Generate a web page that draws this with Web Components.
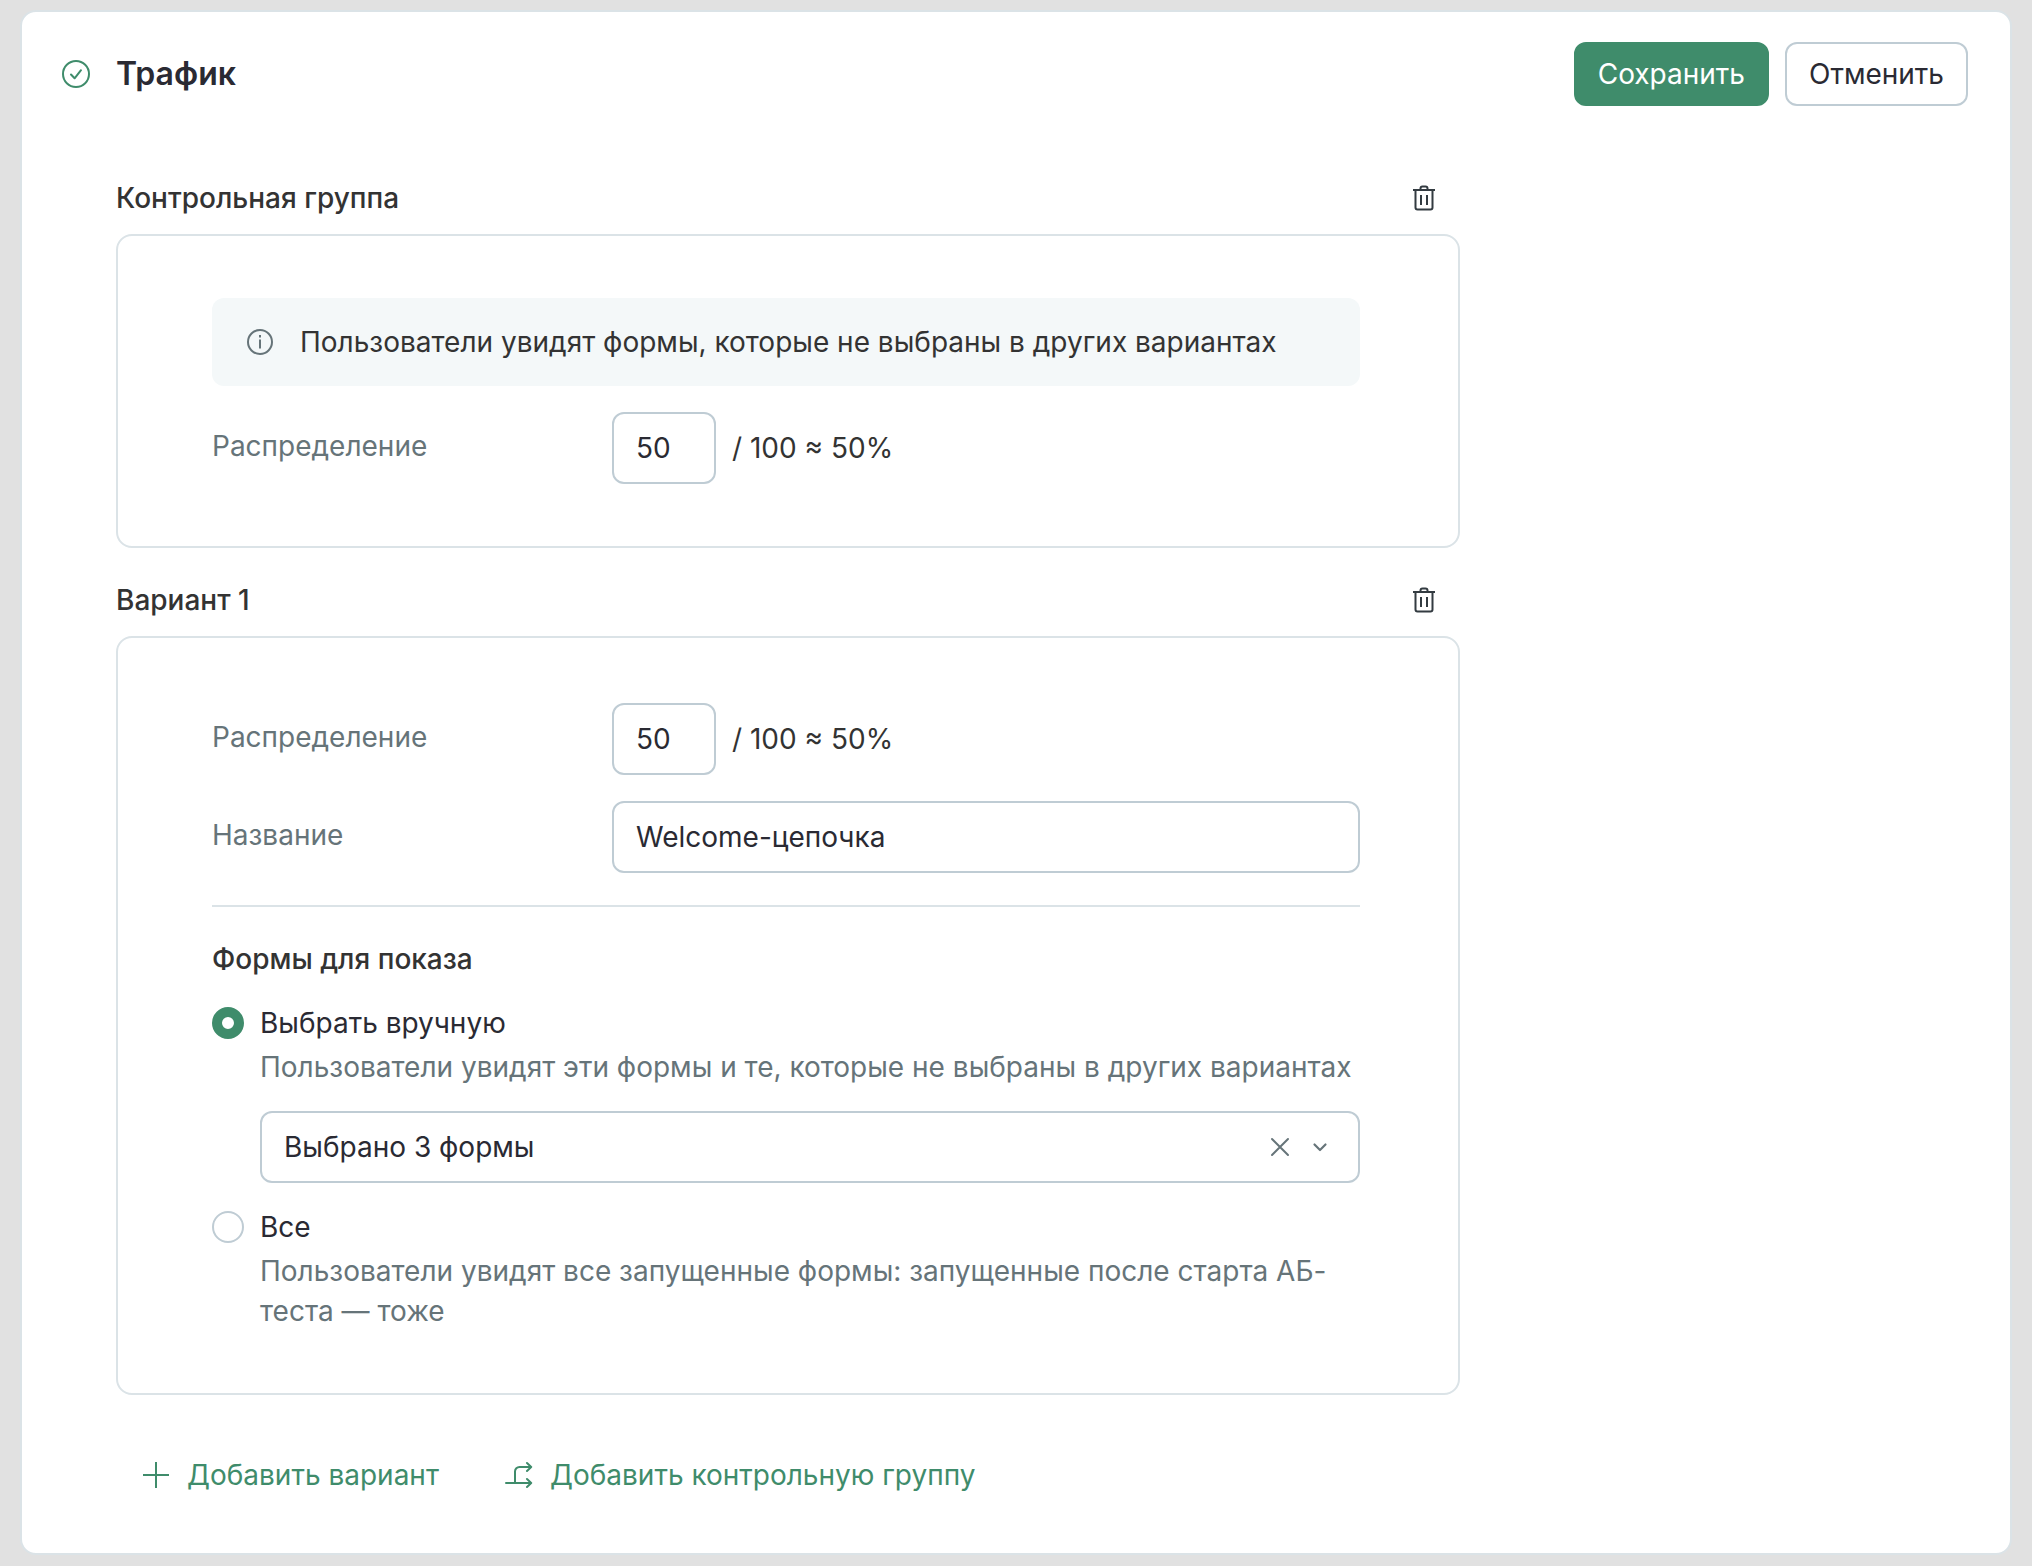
<!DOCTYPE html>
<html lang="ru">
<head>
<meta charset="utf-8">
<meta name="viewport" content="width=device-width, initial-scale=1">
<title>Трафик</title>
<style>
  :root {
    --green: #3f8c6b;
    --line: #dbe3e7;
    --field-line: #bfccd4;
    --muted: #667479;
    --ink: #2a2a33;
    --text: #333;
  }
  body {
    margin: 0;
    padding: 10px 20px 11px;
    background: #e1e1e1;
    color: var(--text);
    font: 28px/40px Inter, "Liberation Sans", sans-serif;
  }
</style>
</head>
<body>
<traffic-panel></traffic-panel>

<script>
const reset = `
  *, *::before, *::after { box-sizing: border-box; }
  button, input, select { font: inherit; color: inherit; margin: 0; }
  button { cursor: pointer; }
  svg { display: block; fill: none; stroke: currentColor; stroke-width: 2; }
`;

function define(name, html, setup) {
  const template = document.createElement('template');
  template.innerHTML = html;
  customElements.define(name, class extends HTMLElement {
    constructor() {
      super();
      this.attachShadow({ mode: 'open' }).append(template.content.cloneNode(true));
    }
    connectedCallback() {
      if (setup) setup(this, this.shadowRoot);
    }
  });
}

const icons = {
  check: '<circle cx="14" cy="14" r="13"/><path d="M9 14.5l3.6 3.8L19 10.2" stroke-linecap="round" stroke-linejoin="round"/>',
  trash: '<path d="M3 6h22M5.500 6v17.500a2 2 0 0 0 2 2h13a2 2 0 0 0 2-2V6M10.500 6V4.500a2 2 0 0 1 2-2h3a2 2 0 0 1 2 2V6M11 11v10M17 11v10"/>',
  info: '<circle cx="14" cy="14" r="12"/><path d="M14 11.500v9M14 7v2.500" stroke-width="2"/>',
  plus: '<path d="M14 1v26M1 14h26"/>',
  cross: '<path d="M6 6l16 16M22 6L6 22" stroke-linecap="round"/>',
  chevron: '<path d="M8.500 11.500l5.500 5.500 5.500-5.500" stroke-width="2.200" stroke-linecap="round" stroke-linejoin="round"/>',
  branch: '<path d="M1 22h25M10 22V10.500a4.500 4.500 0 0 1 4.500-4.500H26M22 2l4.200 4-4.200 4M22 18l4.200 4-4.200 4" stroke-linecap="round" stroke-linejoin="round"/>'
};

define('ui-icon', `
  <style>
    ${reset}
    :host { display: block; flex: none; width: 28px; height: 28px; }
  </style>
  <svg viewBox="0 0 28 28" width="28" height="28" aria-hidden="true"></svg>
`, (host, root) => {
  root.querySelector('svg').innerHTML = icons[host.getAttribute('name')] || '';
});

define('ui-button', `
  <style>
    ${reset}
    :host { display: block; }
    button {
      display: flex; align-items: center; justify-content: center;
      height: 64px; padding: 0 22px;
      border: 2px solid var(--field-line); border-radius: 12px;
      background: #fff; color: var(--ink); white-space: nowrap;
    }
    :host([primary]) button { background: var(--green); border-color: var(--green); color: #fff; }
  </style>
  <button type="button"><slot></slot></button>
`);

define('link-button', `
  <style>
    ${reset}
    :host { display: block; color: var(--green); }
    button {
      display: flex; align-items: center; gap: 17px;
      padding: 0; border: 0; background: none; white-space: nowrap;
    }
  </style>
  <button type="button"><span><slot></slot></span></button>
`, (host, root) => {
  const icon = document.createElement('ui-icon');
  icon.setAttribute('name', host.getAttribute('icon'));
  root.querySelector('button').prepend(icon);
});

define('info-note', `
  <style>
    ${reset}
    :host {
      display: flex; align-items: center; gap: 26px;
      padding: 24px 34px; border-radius: 12px; background: #f4f8f9;
    }
    ui-icon { color: var(--muted); }
  </style>
  <ui-icon name="info"></ui-icon><span><slot></slot></span>
`);

define('field-row', `
  <style>
    ${reset}
    :host { display: flex; align-items: center; }
    label { flex: none; width: 400px; padding-bottom: 4px; color: var(--muted); }
    .control { flex: 1; display: flex; align-items: center; gap: 16px; min-width: 0; }
    input {
      flex: 1; min-width: 0; height: 72px; padding: 0 22px;
      border: 2px solid var(--field-line); border-radius: 12px;
      background: #fff; color: var(--ink); outline: none;
    }
    :host([short]) input { flex: none; width: 104px; }
    slot { display: block; }
    :host(:not([short])) slot { display: none; }
  </style>
  <label for="field"></label>
  <div class="control"><input id="field" type="text"><slot></slot></div>
`, (host, root) => {
  root.querySelector('label').textContent = host.getAttribute('label');
  root.querySelector('input').value = host.getAttribute('value');
});

define('forms-select', `
  <style>
    ${reset}
    :host {
      display: flex; align-items: center; gap: 12px; height: 72px; padding-right: 24px;
      border: 2px solid var(--field-line); border-radius: 12px; background: #fff;
      color: var(--muted);
    }
    select {
      flex: 1; min-width: 0; height: 100%; padding: 0 22px; border: 0;
      appearance: none; background: none; color: var(--ink); outline: none;
    }
    button { padding: 0; border: 0; background: none; }
  </style>
  <select aria-label="Формы"><option>Выбрано 3 формы</option></select>
  <button type="button" aria-label="Очистить"><ui-icon name="cross"></ui-icon></button>
  <ui-icon name="chevron"></ui-icon>
`);

define('forms-choice', `
  <style>
    ${reset}
    :host { display: grid; gap: 24px; }
    .option { display: grid; grid-template-columns: 32px 1fr; column-gap: 16px; row-gap: 4px; align-items: center; }
    input {
      appearance: none; width: 32px; height: 32px; margin: 0;
      border: 2px solid var(--field-line); border-radius: 50%; background: #fff;
    }
    input:checked { border: 10px solid var(--green); }
    label { color: var(--ink); }
    p { grid-column: 2; margin: 0; color: var(--muted); }
    forms-select { grid-column: 2; margin-top: 20px; }
  </style>
  <div class="option">
    <input type="radio" name="forms" id="manual" checked>
    <label for="manual">Выбрать вручную</label>
    <p>Пользователи увидят эти формы и те, которые не выбраны в других вариантах</p>
    <forms-select></forms-select>
  </div>
  <div class="option">
    <input type="radio" name="forms" id="all">
    <label for="all">Все</label>
    <p>Пользователи увидят все запущенные формы: запущенные после старта АБ-теста — тоже</p>
  </div>
`);

define('variant-group', `
  <style>
    ${reset}
    :host { display: block; }
    header { display: flex; align-items: center; justify-content: space-between; padding-right: 22px; margin-bottom: 16px; }
    h2 { margin: 0; font-size: 28px; line-height: 40px; font-weight: 500; }
    button { padding: 0; border: 0; background: none; color: #333b41; }
    .box {
      display: flex; flex-direction: column; gap: 26px;
      padding: 62px 98px 62px 94px; border: 2px solid var(--line); border-radius: 16px;
    }
    ::slotted(field-row:first-child) { margin-top: 3px; }
  </style>
  <header>
    <h2></h2>
    <button type="button" aria-label="Удалить"><ui-icon name="trash"></ui-icon></button>
  </header>
  <div class="box"><slot></slot></div>
`, (host, root) => {
  root.querySelector('h2').textContent = host.getAttribute('heading');
});

define('forms-section', `
  <style>
    ${reset}
    :host { display: block; margin-top: 6px; padding-top: 32px; border-top: 2px solid var(--line); }
    h3 { margin: 0 0 24px; font-size: 28px; line-height: 40px; font-weight: 500; }
  </style>
  <h3>Формы для показа</h3>
  <forms-choice></forms-choice>
`);

define('traffic-panel', `
  <style>
    ${reset}
    :host {
      display: block; padding: 30px 42px 58px 40px;
      border: 2px solid var(--line); border-radius: 16px; background: #fff;
    }
    .head { display: flex; align-items: center; gap: 16px; }
    .head > ui-icon { color: var(--green); margin-right: 10px; }
    h1 { flex: 1; margin: 0; font-size: 32px; line-height: 40px; font-weight: 600; color: var(--ink); }
    main { display: grid; gap: 32px; max-width: 1398px; margin-top: 72px; padding-left: 54px; }
    .actions { display: flex; gap: 66px; padding: 28px 0 0 26px; }
  </style>
  <div class="head">
    <ui-icon name="check"></ui-icon>
    <h1>Трафик</h1>
    <ui-button primary>Сохранить</ui-button>
    <ui-button>Отменить</ui-button>
  </div>
  <main>
    <variant-group heading="Контрольная группа">
      <info-note>Пользователи увидят формы, которые не выбраны в других вариантах</info-note>
      <field-row short label="Распределение" value="50">/ 100 ≈ 50%</field-row>
    </variant-group>
    <variant-group heading="Вариант 1">
      <field-row short label="Распределение" value="50">/ 100 ≈ 50%</field-row>
      <field-row label="Название" value="Welcome-цепочка"></field-row>
      <forms-section></forms-section>
    </variant-group>
    <div class="actions">
      <link-button icon="plus">Добавить вариант</link-button>
      <link-button icon="branch">Добавить контрольную группу</link-button>
    </div>
  </main>
`);
</script>
</body>
</html>
